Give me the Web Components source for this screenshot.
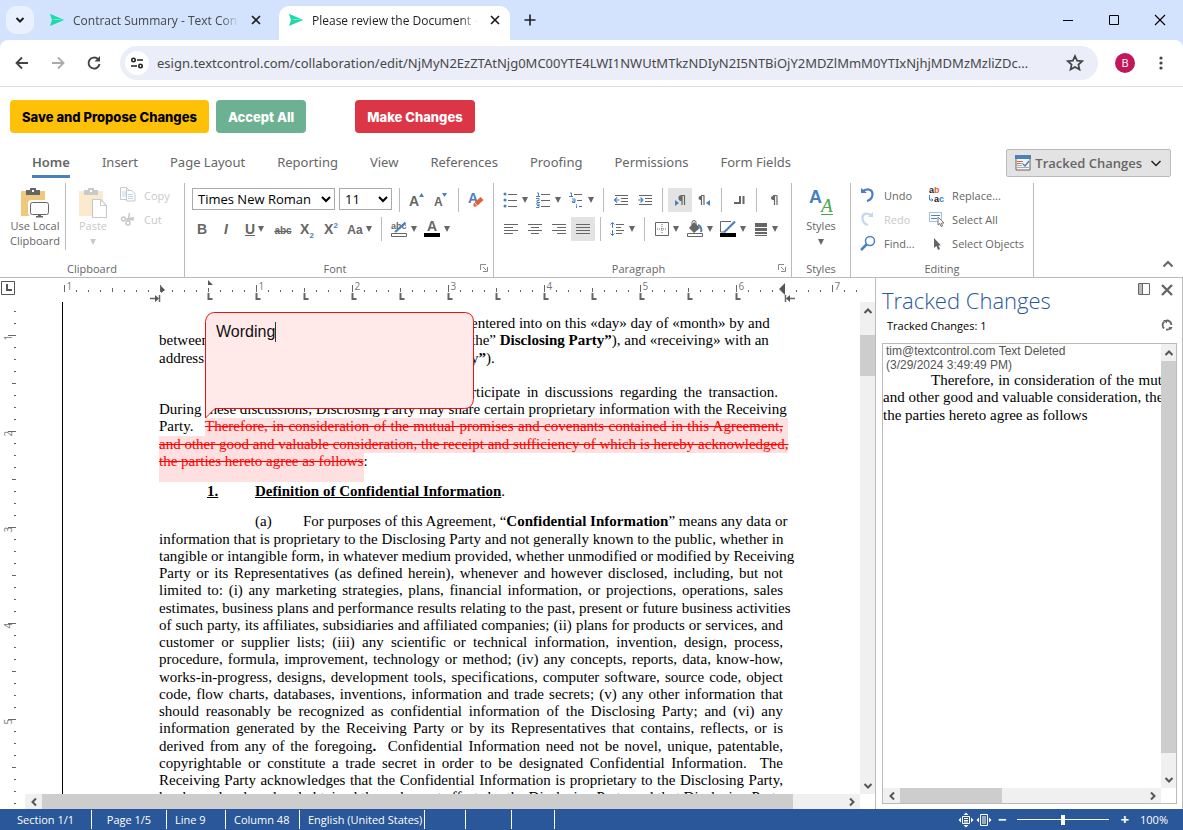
<!DOCTYPE html>
<html lang="en">
<head>
<meta charset="utf-8">
<title>Please review the Document - Text Control</title>
<style>
html, body {
    height: 100%;
    margin: 0;
}
body {
    --ink: #666;
    --line: #bbb;
    --blue: #4a80bd;
    --bar: #2a579a;
    font-family: "Open Sans", "Noto Sans", sans-serif;
    font-size: 13px;
    color: var(--ink);
    background: #fff;
    overflow: hidden;
}
</style>
</head>
<body>
<review-app></review-app>

<script>
const ICONS = {
    logo: [16, 14, `<path d="M1 1l14 6-14 6 2-6z" fill="#1fd8a4"/><path d="M1 1l14 6H6z" fill="#14e0ae"/><path d="M3 7h12l-8-1z" fill="#fff" opacity=".5"/>`],
    chevron: [12, 12, `<path d="M2.500 4l3.500 3.500 3.500-3.500" fill="none" stroke="currentColor" stroke-width="2"/>`],
    chevronThin: [12, 12, `<path d="M1.500 4l4.500 4.500 4.500-4.500" fill="none" stroke="currentColor" stroke-width="1.500"/>`],
    chevronUp: [12, 12, `<path d="M1.500 8.500l4.500-4.500 4.500 4.500" fill="none" stroke="currentColor" stroke-width="2"/>`],
    close: [12, 12, `<path d="M2 2l8 8M10 2l-8 8" stroke="currentColor" stroke-width="1.700"/>`],
    closeBold: [14, 14, `<path d="M2 2l10 10M12 2l-10 10" stroke="currentColor" stroke-width="2.400"/>`],
    plus: [14, 14, `<path d="M7 1.500v11M1.500 7h11" stroke="currentColor" stroke-width="1.600"/>`],
    minimize: [12, 12, `<path d="M1 6.500h10" stroke="currentColor"/>`],
    maximize: [12, 12, `<path d="M1.500 1.500h9v9h-9z" fill="none" stroke="currentColor"/>`],
    quit: [12, 12, `<path d="M1 1l10 10M11 1L1 11" stroke="currentColor" stroke-width="1.100"/>`],
    back: [16, 16, `<path d="M14 8H3M8 2.500L2.500 8 8 13.500" fill="none" stroke="currentColor" stroke-width="1.800"/>`],
    forward: [16, 16, `<path d="M2 8h11M8 2.500L13.500 8 8 13.500" fill="none" stroke="currentColor" stroke-width="1.800"/>`],
    reload: [16, 16, `<path d="M13.500 9A5.500 5.500 0 1 1 12 4.200" fill="none" stroke="currentColor" stroke-width="1.900"/><path d="M14 1v5.500H8.500z" fill="currentColor"/>`],
    site: [14, 14, `<g fill="none" stroke="currentColor" stroke-width="1.600"><circle cx="3.500" cy="4" r="1.700"/><path d="M7 4h6M1 10h6"/><circle cx="10.500" cy="10" r="1.700"/></g>`],
    star: [18, 18, `<path d="M9 2l2.100 4.700 5.100.5-3.800 3.400 1.100 5L9 13l-4.500 2.600 1.100-5L1.800 7.200l5.100-.5z" fill="none" stroke="currentColor" stroke-width="1.700"/>`],
    dots: [4, 16, `<circle cx="2" cy="3" r="1.600"/><circle cx="2" cy="8" r="1.600"/><circle cx="2" cy="13" r="1.600"/>`],
    tracked: [16, 16, `<path d="M1 2h14v13H1z" fill="#f5f5f5" stroke="currentColor"/><path d="M0 0h16v4H0z" fill="#4a80bd"/><path d="M2 6.500h6M2 8.500h3" stroke="#e0603a"/><path d="M5 8.500h3M2 10.500h5M2 12.500h12" stroke="#aaa"/><path d="M8 9l2 2 4-5" fill="none" stroke="#4a80bd" stroke-width="1.500"/>`],
    localClip: [28, 30, `<path d="M0 3h24v25H0z" fill="#efc87c"/><path d="M5 2h4V0h6v2h4v5H5z" fill="#666"/><path d="M11 2h2v2h-2z" fill="#fff"/><rect x="8.500" y="13.500" width="19" height="13" rx="2" fill="#fff" stroke="#fff" stroke-width="3"/><rect x="9.500" y="14.500" width="18" height="12" rx="2" fill="#fff" stroke="#666"/><path d="M17 27h3v1h2v1.500h-7V28h2z" fill="#666"/>`],
    paste: [28, 30, `<path d="M0 3h24v25H0z" fill="#fbeacd"/><path d="M5 2h4V0h6v2h4v5H5z" fill="#c9c9c9"/><path d="M11 2h2v2h-2z" fill="#fff"/><path d="M13.500 11.500h8l6 6v12h-14z" fill="#fff" stroke="#c9c9c9" stroke-width="1.200"/><path d="M21.500 11.500v6h6" fill="none" stroke="#c9c9c9"/>`],
    copy: [16, 16, `<path d="M.5.500h6l3 3v9h-9z" fill="#fff" stroke="#c9c9c9"/><path d="M6.500.500v3h3" fill="none" stroke="#c9c9c9"/><path d="M2 5h4M2 7h4M2 9h4" stroke="#bcd6f0"/><path d="M6.500 3.500h5l3.500 3v7.500H6.500z" fill="#fff" stroke="#c9c9c9"/><path d="M8 7.500h5M8 9.500h5M8 11.500h5" stroke="#bcd6f0"/>`],
    cut: [16, 16, `<g fill="none" stroke="#c9c9c9" stroke-width="1.500"><circle cx="3.500" cy="8" r="2"/><circle cx="8" cy="12" r="2"/><path d="M5.500 8.500L14 6.500M8 10L9.500 2"/><path d="M8 8.500h6" stroke-width="2"/></g>`],
    grow: [18, 18, `<text x="1" y="15" font-family="Liberation Sans" font-weight="700" font-size="14" fill="currentColor">A</text><path d="M11 6l2.500-4L16 6z" fill="#4a80bd"/>`],
    shrink: [18, 18, `<text x="2" y="15" font-family="Liberation Sans" font-weight="700" font-size="12" fill="currentColor">A</text><path d="M10 2l2.500 4L15 2z" fill="#4a80bd"/>`],
    clearFormat: [18, 18, `<text x="1" y="12" font-family="Liberation Sans" font-weight="700" font-size="14" fill="#4a80bd">A</text><path d="M6.500 12.500l7-6.500 3 3-7 6.500H6.500z" fill="#e0603a"/><path d="M7 11l3.500 4" stroke="#fff" stroke-width=".8"/>`],
    highlight: [18, 18, `<text x="1" y="9" font-family="Liberation Sans" font-weight="700" font-size="9" fill="currentColor">abc</text><path d="M15.500 2.500L8 9.500 5 12" stroke="#4a80bd" stroke-width="2.200" fill="none"/><path d="M1.500 13.500h15v3h-15z" fill="#fff" stroke="currentColor"/>`],
    fontColor: [18, 18, `<text x="4" y="11" font-family="Liberation Sans" font-weight="700" font-size="14" fill="currentColor">A</text><path d="M1 13h16v4H1z" fill="#000"/>`],
    bullets: [16, 16, `<g fill="#4a80bd"><circle cx="2" cy="2" r="1.500"/><circle cx="2" cy="8" r="1.500"/><circle cx="2" cy="14" r="1.500"/></g><path d="M5 2.500h9M5 8.500h9M5 14.500h9" stroke="currentColor"/>`],
    numbers: [16, 16, `<g fill="none" stroke="#4a80bd"><path d="M1 1h1.500v3.500M0 4.500h4M0 6.500h3v2H1v2h3M0 12h3v3.500H0M1 13.500h2"/></g><path d="M5 2.500h9M5 8.500h9M5 14.500h9" stroke="currentColor"/>`],
    levels: [16, 16, `<g fill="none" stroke="#4a80bd"><path d="M1 1h1.500v3.500M0 4.500h4M3 7h3v3.500H3.500V9H6M7.500 12v.8M7.500 13.500V16"/></g><path d="M5 2.500h8M8 8.500h5M10 14.500h3" stroke="currentColor"/>`],
    outdent: [16, 16, `<path d="M2 3.500h13M8 6.500h7M8 9.500h7M2 12.500h13" stroke="currentColor"/><path d="M1.500 8h5M4 5.500L1.500 8 4 10.500" fill="none" stroke="#4a80bd" stroke-width="1.200"/>`],
    indent: [16, 16, `<path d="M2 3.500h13M8 6.500h7M8 9.500h7M2 12.500h13" stroke="currentColor"/><path d="M1 8h5M3.500 5.500L6 8l-2.500 2.500" fill="none" stroke="#4a80bd" stroke-width="1.200"/>`],
    ltr: [16, 16, `<path d="M3 8v6l4-3z" fill="#4a80bd"/><path d="M13 3.500H9.500a2.500 2.500 0 0 0 0 5M10 3.500V13M12.500 3.500V13" fill="none" stroke="currentColor" stroke-width="1.200"/><path d="M10 4H9a2 2 0 0 0 0 4h1z" fill="currentColor"/>`],
    rtl: [16, 16, `<path d="M14 8v6l-4-3z" fill="#4a80bd"/><path d="M8.500 3.500H5M5.500 3.500V13M8 3.500V13" fill="none" stroke="currentColor" stroke-width="1.200"/><path d="M5.500 4h-1a2 2 0 0 0 0 4h1z" fill="currentColor"/>`],
    tabs: [16, 16, `<path d="M3 11h6V4M12.500 4v8" fill="none" stroke="currentColor" stroke-width="2"/>`],
    pilcrow: [16, 16, `<path d="M11 3.500H7M8.500 3.500V13M11 3.500V13" fill="none" stroke="currentColor" stroke-width="1.200"/><path d="M8.500 4H7a2 2 0 0 0 0 4h1.500z" fill="currentColor"/>`],
    left: [16, 16, `<path d="M1 3.500h14M1 6.500h9M1 9.500h14M1 12.500h9" stroke="currentColor"/>`],
    center: [16, 16, `<path d="M1 3.500h14M4 6.500h8M1 9.500h14M4 12.500h8" stroke="currentColor"/>`],
    right: [16, 16, `<path d="M1 3.500h14M6 6.500h9M1 9.500h14M6 12.500h9" stroke="currentColor"/>`],
    justify: [16, 16, `<path d="M1 3.500h14M1 6.500h14M1 9.500h14M1 12.500h14" stroke="currentColor"/>`],
    spacing: [16, 16, `<path d="M6 3.500h8M6 6.500h5M6 9.500h8M6 12.500h6" stroke="currentColor"/><path d="M2.500 1.500V7M2.500 9v5.500M.5 3.500l2-2 2 2M.5 12.500l2 2 2-2" fill="none" stroke="#4a80bd"/>`],
    borders: [16, 16, `<path d="M1.500 1.500h13v13h-13z" fill="none" stroke="currentColor"/><path d="M8 3v10M3 8h10" stroke="currentColor" stroke-dasharray="1 1"/>`],
    fill: [18, 18, `<path d="M3 8l5-6 6 6-6 5z" fill="currentColor"/><path d="M6 5V2.500a2 2 0 0 1 4 0V7" fill="none" stroke="currentColor"/><path d="M12 5c3 1 4 4 3 7" fill="none" stroke="#4a80bd" stroke-width="2"/><path d="M1.500 13.500h15v3h-15z" fill="#fff" stroke="currentColor"/>`],
    frame: [18, 18, `<path d="M12 1.500H1.500v10.500h5" fill="none" stroke="currentColor"/><path d="M16 1.500L8 9.500 5 12" fill="none" stroke="#4a80bd" stroke-width="2.200"/><path d="M1 13h16v4H1z" fill="#000"/>`],
    frameLines: [16, 16, `<path d="M2 2h12v4H2zM2 7h12v3H2zM2 11h12v2H2zM2 14h12v1H2z" fill="currentColor"/>`],
    styles: [28, 30, `<text x="2" y="15" font-family="Liberation Sans" font-weight="700" font-size="18" fill="#4a80bd">A</text><text x="14" y="24" font-family="Liberation Serif" font-style="italic" font-size="19" fill="#49a94d">A</text><path d="M14 26.500h12" stroke="#49a94d"/>`],
    undo: [16, 16, `<path d="M1 6h6L1 1z" fill="#4a80bd"/><path d="M3 4c5-3 9.500-1.500 9.500 3 0 3-2 6-5.500 7" fill="none" stroke="#4a80bd" stroke-width="2.200"/>`],
    redo: [16, 16, `<path d="M13 6H8l5-5z" fill="#c3d8ee"/><path d="M11 4C6 1 2.500 3 2.500 7c0 3 1.500 6 5.500 7" fill="none" stroke="#c3d8ee" stroke-width="2.200"/>`],
    find: [16, 16, `<circle cx="10" cy="6" r="4.500" fill="none" stroke="#4a80bd" stroke-width="1.500"/><path d="M7 9l-6 6" stroke="#4a80bd" stroke-width="2.500"/>`],
    replace: [16, 16, `<g font-family="Liberation Sans" font-weight="700" font-size="9"><text x="1" y="6" fill="#222">a</text><text x="6" y="6" fill="#e0603a">b</text><text x="6" y="15" fill="#222">a</text><text x="11" y="15" fill="#4a80bd">c</text></g><path d="M1.500 8v5H5M3.500 11.500L5 13l-1.500 1.500" fill="none" stroke="#4a80bd"/>`],
    selectAll: [16, 16, `<path d="M1.500 1.500h12v9h-12z" fill="none" stroke="#4a80bd" stroke-dasharray="1 1"/><path d="M3 4.500h9M3 7.500h6" stroke="#4a80bd"/><path d="M10 6v8l2-1.500 1 3 1.500-.5-1-3H16z" fill="#fff" stroke="#777"/>`],
    pointer: [16, 16, `<path d="M6 3v10l2.500-2 1.500 4 2-1-1.500-3.500H13z" fill="currentColor"/>`],
    launcher: [8, 8, `<path d="M.5 6V.500H6M3 3l3 3M7.500 3v4.500H3" fill="none" stroke="#888"/>`],
    tabL: [16, 16, `<path d="M1.500 1.500h13v13h-13z" fill="none" stroke="currentColor"/><path d="M7 4v6h5" fill="none" stroke="currentColor" stroke-width="2"/>`],
    dock: [12, 12, `<path d="M.5.500h11v11H.5z" fill="none" stroke="currentColor"/><path d="M1 1h3v10H1z" fill="#bbb"/><path d="M4.500 1v10" stroke="currentColor"/>`],
    refresh: [14, 14, `<path d="M4 10.500A4.500 4.500 0 0 1 4.500 3.500M6 2.600A4.500 4.500 0 0 1 11.400 7M10.500 10A4.500 4.500 0 0 1 6 11.400" fill="none" stroke="currentColor" stroke-width="1.800"/><path d="M3 2h4v3.500zM8.500 9h4l-1.500 3z" fill="currentColor"/>`],
    wholePage: [16, 16, `<path d="M4.500 4.500h7v7h-7zM6 6.500h4M6 8.500h4M6 10h4" fill="none" stroke="currentColor"/><path d="M5.500 3L8 .500 10.500 3zM5.500 13L8 15.500l2.500-2.500zM3 5.500L.5 8 3 10.500zM13 5.500L15.500 8 13 10.500z" fill="currentColor"/>`],
    pageWidth: [16, 16, `<path d="M4.500 2.500h7v11h-7zM6 5h4M6 7h4M6 9h4M6 11h4" fill="none" stroke="currentColor"/><path d="M3 5.500L.5 8 3 10.500zM13 5.500L15.500 8 13 10.500z" fill="currentColor"/>`],
};

/**
 * Base for all elements below: opens a shadow root with the given markup.
 */
class UiElement extends HTMLElement {
    connectedCallback() {
        if (this.shadowRoot) return;
        this.attachShadow({mode: "open"}).innerHTML = this.render();
    }
}

customElements.define("ui-icon", class extends UiElement {
    render() {
        const [w, h, body] = ICONS[this.getAttribute("name")];
        return `
<style>
:host { display: inline-flex; flex: none; }
svg { display: block; fill: currentColor; }
</style>
<svg width="${w}" height="${h}" viewBox="0 0 ${w} ${h}" aria-hidden="true">${body}</svg>`;
    }
});

customElements.define("browser-tab", class extends UiElement {
    render() {
        return `
<style>
:host {
    display: flex;
    align-items: center;
    gap: 8px;
    width: 231px;
    height: 34px;
    margin-top: 6px;
    padding: 0 9px 6px;
    box-sizing: border-box;
    border-radius: 10px 10px 0 0;
    font-size: 12px;
    color: #474747;
}
:host([selected]) {
    margin-left: 8px;
    background: #fff;
    color: #1f1f1f;
}
span {
    flex: 1;
    overflow: hidden;
    white-space: nowrap;
    mask-image: linear-gradient(90deg, #000 88%, transparent 98%);
}
button {
    display: flex;
    border: 0;
    padding: 0;
    background: none;
    color: #1f1f1f;
}
</style>
<ui-icon name="logo"></ui-icon>
<span><slot></slot></span>
<button aria-label="Close tab"><ui-icon name="close"></ui-icon></button>`;
    }
});

customElements.define("browser-chrome", class extends UiElement {
    render() {
        return `
<style>
:host { display: block; flex: none; background: #d3e2fd; color: #1f1f1f; }
button { display: flex; border: 0; padding: 0; background: none; color: inherit; }
.strip {
    display: flex;
    align-items: center;
    height: 40px;
    padding: 0 17px 0 6px;
}
.search {
    width: 28px;
    height: 28px;
    border-radius: 10px;
    background: #e9f0fe;
    align-items: center;
    justify-content: center;
    margin-right: 6px;
}
.new { margin-left: 13px; flex: 1; }
.window { display: flex; gap: 34px; color: #000; }
.tools {
    display: flex;
    align-items: center;
    gap: 20px;
    height: 46px;
    padding: 0 20px 0 14px;
    background: #fff;
    border-radius: 8px 8px 0 0;
    border-bottom: 1px solid #ddd;
    color: #444;
}
.off { color: #aaa; }
.address {
    flex: 1;
    display: flex;
    align-items: center;
    gap: 8px;
    height: 34px;
    padding: 0 14px 0 5px;
    margin: 0 -3px 0 -2px;
    border-radius: 17px;
    background: #ebeef9;
}
.site {
    width: 24px;
    height: 24px;
    border-radius: 12px;
    background: #fff;
    align-items: center;
    justify-content: center;
    color: #222;
}
input {
    flex: 1;
    min-width: 0;
    border: 0;
    padding: 0;
    background: none;
    font: 13px "Noto Sans", sans-serif;
    color: #474747;
    text-overflow: ellipsis;
}
.avatar {
    width: 20px;
    height: 20px;
    margin-right: 4px;
    border-radius: 10px;
    background: #c2185b;
    color: #fff;
    font: 11px/20px "Open Sans", sans-serif;
    justify-content: center;
}
</style>
<div class="strip">
    <button class="search" aria-label="Search tabs"><ui-icon name="chevron"></ui-icon></button>
    <browser-tab>Contract Summary - Text Control</browser-tab>
    <browser-tab selected>Please review the Document - Text Control</browser-tab>
    <button class="new" aria-label="New tab"><ui-icon name="plus"></ui-icon></button>
    <div class="window">
        <button aria-label="Minimize"><ui-icon name="minimize"></ui-icon></button>
        <button aria-label="Maximize"><ui-icon name="maximize"></ui-icon></button>
        <button aria-label="Close"><ui-icon name="quit"></ui-icon></button>
    </div>
</div>
<div class="tools">
    <button aria-label="Back"><ui-icon name="back"></ui-icon></button>
    <button class="off" aria-label="Forward"><ui-icon name="forward"></ui-icon></button>
    <button aria-label="Reload"><ui-icon name="reload"></ui-icon></button>
    <div class="address">
        <button class="site" aria-label="Site information"><ui-icon name="site"></ui-icon></button>
        <input aria-label="Address" value="esign.textcontrol.com/collaboration/edit/NjMyN2EzZTAtNjg0MC00YTE4LWI1NWUtMTkzNDIyN2I5NTBiOjY2MDZlMmM0YTIxNjhjMDMzMzliZDc...">
        <button aria-label="Bookmark"><ui-icon name="star"></ui-icon></button>
    </div>
    <button class="avatar" aria-label="Profile">B</button>
    <button aria-label="Menu"><ui-icon name="dots"></ui-icon></button>
</div>`;
    }
});

customElements.define("review-actions", class extends UiElement {
    render() {
        return `
<style>
:host { display: flex; flex: none; gap: 7px; padding: 13px 10px 12px; }
button {
    height: 33px;
    padding: 0 12px;
    border: 0;
    border-radius: 4px;
    font: 800 13px Inter, sans-serif;
    color: #fff;
}
.save { background: #ffc107; color: #000; }
.accept { background: #6bb192; }
.make { background: #dc3545; margin-left: 42px; }
</style>
<button class="save">Save and Propose Changes</button>
<button class="accept">Accept All</button>
<button class="make">Make Changes</button>`;
    }
});

customElements.define("ribbon-group", class extends UiElement {
    render() {
        const launcher = this.hasAttribute("launcher")
            ? `<button aria-label="${this.getAttribute("label")} settings"><ui-icon name="launcher"></ui-icon></button>` : "";
        return `
<style>
:host {
    display: flex;
    flex-direction: column;
    justify-content: space-between;
    box-sizing: border-box;
    border-right: 1px solid var(--line);
    padding: 0 5px;
}
footer {
    display: flex;
    align-items: center;
    height: 18px;
    font-size: 11px;
}
footer span { flex: 1; text-align: center; }
button { display: flex; border: 0; padding: 0; background: none; }
</style>
<slot></slot>
<footer><span>${this.getAttribute("label")}</span>${launcher}</footer>`;
    }
});

customElements.define("ribbon-button", class extends UiElement {
    render() {
        const icon = this.getAttribute("icon");
        return `
<style>
:host { display: block; }
button {
    display: flex;
    align-items: center;
    justify-content: center;
    height: 24px;
    min-width: 24px;
    border: 0;
    padding: 0;
    background: none;
    font: 700 14px "Liberation Sans", sans-serif;
    color: inherit;
    white-space: nowrap;
}
:host([active]) button { background: #e3e3e3; }
:host([drop]:not([big])) button { min-width: 33px; gap: 3px; }
:host([wide]) button {
    justify-content: flex-start;
    gap: 8px;
    padding: 0 4px;
    font: 11px "Open Sans", sans-serif;
}
:host([big]) button {
    flex-direction: column;
    justify-content: flex-start;
    width: 100%;
    height: 67px;
    padding: 5px 0 0;
    font: 11px/15px "Open Sans", sans-serif;
    white-space: normal;
}
:host([disabled]) button { color: #c9c9c9; }
.arrow {
    border: 3px solid transparent;
    border-top: 6px solid currentColor;
    border-bottom: 0;
}
:host([big]) .arrow { margin-top: 6px; }
</style>
<button aria-label="${this.title || this.textContent}">
    ${icon ? `<ui-icon name="${icon}"></ui-icon>` : ""}
    ${this.textContent.trim() ? `<span><slot></slot></span>` : ""}
    ${this.hasAttribute("drop") ? `<i class="arrow"></i>` : ""}
</button>`;
    }
});

customElements.define("ribbon-bar", class extends UiElement {
    render() {
        const tabs = ["Insert", "Page Layout", "Reporting", "View", "References", "Proofing", "Permissions", "Form Fields"];
        return `
<style>
:host { display: block; flex: none; border-bottom: 1px solid var(--line); }
nav { display: flex; align-items: center; height: 36px; padding: 0 12px 2px 32px; }
nav button {
    border: 0;
    border-bottom: 3px solid transparent;
    padding: 3px 0;
    margin-right: 32px;
    background: none;
    font: 13px/20px "Noto Sans", sans-serif;
    color: inherit;
    white-space: nowrap;
}
nav .home { font-weight: 600; border-color: var(--blue); }
nav .tracked {
    display: flex;
    align-items: center;
    gap: 4px;
    height: 28px;
    box-sizing: border-box;
    margin: 0 0 0 auto;
    padding: 0 8px;
    border: 1px solid var(--line);
    border-radius: 2px;
    background: #e3e3e3;
    font: 600 13px "Open Sans", sans-serif;
}
.tracked ui-icon:last-child { margin-left: 4px; color: #222; }
.groups { display: flex; height: 94px; }
.clipboard { width: 185px; }
.font { width: 309px; }
.paragraph { width: 298px; }
.styles { width: 59px; }
.editing { width: 183px; }
.row { display: flex; }
.rows { display: grid; gap: 5px; padding-top: 5px; }
.editing .row { justify-content: space-between; }
i.sep { width: 1px; margin: 0 5px; background: var(--line); }
.clipboard i.sep { margin: 0 4px 0 0; }
.clipboard ribbon-button[big] { width: 60px; }
.clipboard ribbon-button[drop] { width: 46px; }
select {
    height: 22px;
    border: 1px solid #aaa;
    padding: 0 1px;
    margin-left: 2px;
    background: #fff;
    font: 13px "Open Sans", sans-serif;
    color: #000;
}
.face { width: 143px; }
.size { width: 53px; margin: 0 2px 0 4px; }
sub, sup { font-size: 8px; line-height: 0; color: var(--blue); }
.collapse {
    display: flex;
    align-self: flex-end;
    border: 0;
    padding: 7px 9px;
    margin-left: auto;
    background: none;
    color: inherit;
}
</style>
<nav>
    <button class="home">Home</button>
    ${tabs.map(tab => `<button>${tab}</button>`).join("")}
    <button class="tracked"><ui-icon name="tracked"></ui-icon>Tracked Changes<ui-icon name="chevronThin"></ui-icon></button>
</nav>
<div class="groups">
    <ribbon-group class="clipboard" label="Clipboard">
        <div class="row">
            <ribbon-button big icon="localClip">Use Local Clipboard</ribbon-button><i class="sep"></i>
            <ribbon-button big drop disabled icon="paste">Paste</ribbon-button>
            <div>
                <ribbon-button wide disabled icon="copy">Copy</ribbon-button>
                <ribbon-button wide disabled icon="cut">Cut</ribbon-button>
            </div>
        </div>
    </ribbon-group>
    <ribbon-group class="font" label="Font" launcher>
        <div class="rows">
            <div class="row">
                <select class="face" aria-label="Font"><option>Times New Roman</option></select>
                <select class="size" aria-label="Font size"><option>11</option></select><i class="sep"></i>
                <ribbon-button icon="grow" title="Grow font"></ribbon-button>
                <ribbon-button icon="shrink" title="Shrink font"></ribbon-button><i class="sep"></i>
                <ribbon-button icon="clearFormat" title="Clear formatting"></ribbon-button>
            </div>
            <div class="row">
                <ribbon-button title="Bold">B</ribbon-button>
                <ribbon-button title="Italic"><em>I</em></ribbon-button>
                <ribbon-button drop title="Underline"><u>U</u></ribbon-button>
                <ribbon-button title="Strikethrough"><s style="font-size: 10px">abc</s></ribbon-button>
                <ribbon-button title="Subscript">X<sub>2</sub></ribbon-button>
                <ribbon-button title="Superscript">X<sup>2</sup></ribbon-button>
                <ribbon-button drop title="Change case"><span style="font-size: 12px">Aa</span></ribbon-button><i class="sep"></i>
                <ribbon-button drop icon="highlight" title="Highlight color"></ribbon-button>
                <ribbon-button drop icon="fontColor" title="Font color"></ribbon-button>
            </div>
        </div>
    </ribbon-group>
    <ribbon-group class="paragraph" label="Paragraph" launcher>
        <div class="rows">
            <div class="row">
                <ribbon-button drop icon="bullets" title="Bullets"></ribbon-button>
                <ribbon-button drop icon="numbers" title="Numbering"></ribbon-button>
                <ribbon-button drop icon="levels" title="Multilevel list"></ribbon-button><i class="sep"></i>
                <ribbon-button icon="outdent" title="Decrease indent"></ribbon-button>
                <ribbon-button icon="indent" title="Increase indent"></ribbon-button><i class="sep"></i>
                <ribbon-button active icon="ltr" title="Left to right"></ribbon-button>
                <ribbon-button icon="rtl" title="Right to left"></ribbon-button><i class="sep"></i>
                <ribbon-button icon="tabs" title="Tabs"></ribbon-button><i class="sep"></i>
                <ribbon-button icon="pilcrow" title="Control characters"></ribbon-button>
            </div>
            <div class="row">
                <ribbon-button icon="left" title="Align left"></ribbon-button>
                <ribbon-button icon="center" title="Center"></ribbon-button>
                <ribbon-button icon="right" title="Align right"></ribbon-button>
                <ribbon-button active icon="justify" title="Justify"></ribbon-button><i class="sep"></i>
                <ribbon-button drop icon="spacing" title="Line spacing"></ribbon-button><i class="sep"></i>
                <ribbon-button drop icon="borders" title="Borders"></ribbon-button>
                <ribbon-button drop icon="fill" title="Fill color"></ribbon-button>
                <ribbon-button drop icon="frame" title="Frame color"></ribbon-button>
                <ribbon-button drop icon="frameLines" title="Frame lines"></ribbon-button>
            </div>
        </div>
    </ribbon-group>
    <ribbon-group class="styles" label="Styles">
        <ribbon-button big drop icon="styles">Styles</ribbon-button>
    </ribbon-group>
    <ribbon-group class="editing" label="Editing">
        <div class="row">
            <div>
                <ribbon-button wide icon="undo">Undo</ribbon-button>
                <ribbon-button wide disabled icon="redo">Redo</ribbon-button>
                <ribbon-button wide icon="find">Find...</ribbon-button>
            </div>
            <div>
                <ribbon-button wide icon="replace">Replace...</ribbon-button>
                <ribbon-button wide icon="selectAll">Select All</ribbon-button>
                <ribbon-button wide icon="pointer">Select Objects</ribbon-button>
            </div>
        </div>
    </ribbon-group>
    <button class="collapse" aria-label="Collapse ribbon"><ui-icon name="chevronUp"></ui-icon></button>
</div>`;
    }
});

/** before / thumb / after are the proportions of the track */
customElements.define("scroll-bar", class extends UiElement {
    render() {
        const [before, thumb, after] = this.getAttribute("track").split(" ");
        const vertical = this.hasAttribute("vertical");
        return `
<style>
:host { display: flex; flex: none; flex-direction: ${vertical ? "column" : "row"}; background: #f0f0f0; color: #555; }
button {
    display: flex;
    align-items: center;
    justify-content: center;
    flex: none;
    ${vertical ? "width: 15px; height: 17px;" : "width: 17px; height: 15px;"}
    border: 0;
    padding: 0;
    background: none;
    color: inherit;
}
svg { fill: none; stroke: currentColor; stroke-width: 2; }
</style>
<button aria-label="Scroll back"><svg width="10" height="10"><path d="${vertical ? "M1.500 7L5 3.500 8.500 7" : "M7 1.500L3.500 5 7 8.500"}"/></svg></button>
<i style="flex: ${before}"></i><i style="flex: ${thumb}; background: #cdcdcd"></i><i style="flex: ${after}"></i>
<button aria-label="Scroll on"><svg width="10" height="10"><path d="${vertical ? "M1.500 3L5 6.500 8.500 3" : "M3 1.500L6.500 5 3 8.500"}"/></svg></button>`;
    }
});

customElements.define("page-ruler", class extends UiElement {
    render() {
        return `
<style>
:host { display: block; overflow: hidden; }
svg { display: block; stroke: #666; font: 10px "Open Sans", sans-serif; }
text { stroke: none; fill: #777; }
.mark { fill: #555; stroke: none; }
</style>
${this.hasAttribute("vertical") ? this.#vertical() : this.#horizontal()}`;
    }

    #horizontal() {
        let out = "";
        for (let i = -8; i <= 58; i++) {
            const x = 160.5 + i * 12;
            const inch = i % 8 === 0;
            const top = inch ? 7 : i % 4 === 0 ? 10 : 12;
            out += `<path d="M${x} ${top}V14"/>`;
            if (inch && i) out += `<text x="${x + 2}" y="12">${Math.abs(i / 8)}</text>`;
            if (i >= 4 && i <= 48 && i % 4 === 0)
                out += `<path d="M${x} 15v6h4" fill="none" stroke-width="2"/>`;
        }
        out += `<path class="mark" d="M161 8l4 4-4 3zM208 2l5 5h-5zM785 5v12l-6-6z"/>`;
        out += `<path d="M150 20.500h7M159.500 17v7M785.500 17v7M788 20.500h7" stroke-width="1.500"/><path class="mark" d="M155 17l4 3.500-4 3.500zM790 17l-4 3.500 4 3.500z"/>`;
        return `<svg width="860" height="25">${out}</svg>`;
    }

    #vertical() {
        let out = "";
        for (let i = -2; i <= 39; i++) {
            const y = 33.5 + i * 12;
            const inch = i % 8 === 0;
            out += `<path d="M${inch ? 8 : i % 4 === 0 ? 12 : 14} ${y}H16"/>`;
            if (inch) out += `<text transform="translate(12 ${y + 5}) rotate(-90)">${i / 8 + 1}</text>`;
        }
        return `<svg width="25" height="508">${out}</svg>`;
    }
});

customElements.define("comment-balloon", class extends UiElement {
    render() {
        return `
<style>
:host {
    display: block;
    position: absolute;
    width: 269px;
    height: 107px;
}
svg { position: absolute; inset: 0; }
textarea {
    position: relative;
    display: block;
    field-sizing: content;
    margin: 10px 0 0 11px;
    padding: 0;
    border: 0;
    border-right: 1px solid #333;
    background: none;
    resize: none;
    overflow: hidden;
    outline: 0;
    font: 16px/20px "Liberation Sans", sans-serif;
    color: #111;
}
</style>
<svg width="269" height="107" aria-hidden="true"><path d="M8.500.500h252q8 1 8 9v78q-1 9-9 9H10L.5 106V9.500q1-8 8-9z" fill="#ffeae9" stroke="#e11" stroke-linejoin="round"/></svg>
<textarea aria-label="Comment" rows="1">Wording</textarea>`;
    }
});

const DELETED = [
    "Therefore, in consideration of the mutual promises and covenants contained in this Agreement,",
    "and other good and valuable consideration, the receipt and sufficiency of which is hereby acknowledged,",
    "the parties hereto agree as follows",
];

const BODY = [
    "information that is proprietary to the Disclosing Party and not generally known to the public, whether in",
    "tangible or intangible form, in whatever medium provided, whether unmodified or modified by Receiving",
    "Party or its Representatives (as defined herein), whenever and however disclosed, including, but not",
    "limited to: (i) any marketing strategies, plans, financial information, or projections, operations, sales",
    "estimates, business plans and performance results relating to the past, present or future business activities",
    "of such party, its affiliates, subsidiaries and affiliated companies; (ii) plans for products or services, and",
    "customer or supplier lists; (iii) any scientific or technical information, invention, design, process,",
    "procedure, formula, improvement, technology or method; (iv) any concepts, reports, data, know-how,",
    "works-in-progress, designs, development tools, specifications, computer software, source code, object",
    "code, flow charts, databases, inventions, information and trade secrets; (v) any other information that",
    "should reasonably be recognized as confidential information of the Disclosing Party; and (vi) any",
    "information generated by the Receiving Party or by its Representatives that contains, reflects, or is",
    "derived from any of the foregoing<b>.</b>&nbsp; Confidential Information need not be novel, unique, patentable,",
    "copyrightable or constitute a trade secret in order to be designated Confidential Information.&nbsp; The",
    "Receiving Party acknowledges that the Confidential Information is proprietary to the Disclosing Party,",
    "has been developed and obtained through great efforts by the Disclosing Party and that Disclosing Party",
];

customElements.define("document-page", class extends UiElement {
    render() {
        return `
<style>
:host {
    display: block;
    position: relative;
    overflow: hidden;
    margin-left: 37px;
    border-left: 1px solid #000;
    padding: 13px 0 0 96px;
    font: 15px/1.15 "Liberation Serif", serif;
    color: #000;
}
section { width: 624px; margin-bottom: 13px; }
section.intro { margin-bottom: 17px; }
p { margin: 0; white-space: nowrap; text-align-last: justify; }
p.loose { text-align-last: left; }
p.split { display: flex; }
.split > :first-child { width: 312px; }
.split > :last-child { flex: 1; }
.split.run > :first-child { width: 46px; text-align-last: left; }
del { color: #f00; background: #ffe0e0; text-decoration-thickness: 1px; }
del.full { display: block; margin-right: -5px; padding-right: 5px; }
del.tail { display: inline-block; padding-bottom: 12px; margin-bottom: -12px; }
.tab { display: inline-block; width: 48px; text-align-last: left; }
.heading { white-space: pre; tab-size: 48px; text-align-last: left; }
.heading u { font-weight: 700; }
comment-balloon { left: 142px; top: 10px; }
</style>
<section class="intro">
    <p class="split loose"><span></span><span>entered into on this «day» day of «month» by and</span></p>
    <p class="split loose"><span>between</span><span>the” <b>Disclosing Party”</b>), and «receiving» with an</span></p>
    <p class="split loose"><span>address</span><span>y<b>”</b>).</span></p>
</section>
<section>
    <p class="split"><span></span><span style="padding-right: 5px">rticipate in discussions regarding the transaction.</span></p>
    <p>During these discussions, Disclosing Party may share certain proprietary information with the Receiving</p>
    <p class="split run"><span>Party.</span><del class="full">${DELETED[0]}</del></p>
    <p><del class="full">${DELETED[1]}</del></p>
    <p class="loose"><del class="tail">${DELETED[2]}</del>:</p>
</section>
<section><p class="heading">&#9;<u>1.&#9;Definition of Confidential Information</u>.</p></section>
<section>
    <p><i class="tab"></i><i class="tab"></i><span class="tab">(a)</span>For purposes of this Agreement, “<b>Confidential Information</b>” means any data or</p>
    ${BODY.map(line => `<p>${line}</p>`).join("")}
</section>
<comment-balloon></comment-balloon>`;
    }
});

customElements.define("text-editor", class extends UiElement {
    render() {
        return `
<style>
:host { display: grid; flex: 1; min-width: 0; grid-template: 24px minmax(0, 1fr) 15px / 25px minmax(0, 1fr) 15px; }
.corner { grid-area: 1 / 1; padding: 2px 0 0; z-index: 1; color: #555; }
.top { grid-area: 1 / 1 / 2 / 4; }
.side { grid-area: 2 / 1 / 4 / 2; }
document-page { grid-area: 2 / 2; }
.v { grid-area: 2 / 3; }
.h { grid-area: 3 / 2 / 4 / 3; }
</style>
<ui-icon class="corner" name="tabL"></ui-icon>
<page-ruler class="top"></page-ruler>
<page-ruler class="side" vertical></page-ruler>
<document-page></document-page>
<scroll-bar class="v" vertical track="16 41 401"></scroll-bar>
<scroll-bar class="h" track="0 751 50"></scroll-bar>`;
    }
});

customElements.define("changes-panel", class extends UiElement {
    render() {
        return `
<style>
:host {
    display: flex;
    flex-direction: column;
    width: 308px;
    box-sizing: border-box;
    border: 1px solid var(--line);
    border-width: 0 1px;
    padding: 5px 5px 5px 6px;
}
button { display: flex; border: 0; padding: 0; background: none; color: inherit; }
header { display: flex; align-items: flex-start; gap: 10px; padding-right: 3px; }
h2 { flex: 1; margin: 0; font: 300 22px/34px "Open Sans", sans-serif; color: var(--bar); white-space: nowrap; }
.count { display: flex; align-items: center; justify-content: space-between; height: 16px; padding: 0 3px 0 5px; font-size: 11px; color: #000; }
.count button { color: var(--ink); }
.list {
    flex: 1;
    min-height: 0;
    display: grid;
    grid-template: minmax(0, 1fr) 15px / minmax(0, 1fr) 15px;
    margin-top: 10px;
    border: 1px solid var(--line);
}
.entries { overflow: hidden; }
.who { margin: 0; padding-left: 3px; font: 12px/14px "Liberation Sans", sans-serif; color: #555; }
.change { width: 624px; font: 15px/1.15 "Liberation Serif", serif; color: #000; }
.change p { margin: 0; white-space: nowrap; text-align-last: justify; }
.change p:first-child { padding-left: 48px; }
.change p:last-child { text-align-last: left; }
</style>
<header>
    <h2>Tracked Changes</h2>
    <button aria-label="Dock"><ui-icon name="dock"></ui-icon></button>
    <button aria-label="Close"><ui-icon name="closeBold"></ui-icon></button>
</header>
<div class="count">Tracked Changes: 1<button aria-label="Refresh"><ui-icon name="refresh"></ui-icon></button></div>
<div class="list">
    <div class="entries">
        <p class="who">tim@textcontrol.com Text Deleted<br>(3/29/2024 3:49:49 PM)</p>
        <div class="change">${DELETED.map(line => `<p>${line}</p>`).join("")}</div>
    </div>
    <scroll-bar vertical track="0 392 18"></scroll-bar>
    <scroll-bar track="0 102 142"></scroll-bar>
</div>`;
    }
});

customElements.define("status-bar", class extends UiElement {
    render() {
        return `
<style>
:host { display: flex; flex: none; height: 21px; align-items: center; background: var(--bar); color: #fff; font-size: 11px; white-space: nowrap; }
span { box-sizing: border-box; height: 19px; line-height: 19px; border-right: 1px solid #fff; padding: 0 8px; text-align: center; }
span:first-child { padding-left: 16px; }
button { display: flex; border: 0; padding: 0; background: none; color: inherit; }
.zoom { display: flex; align-items: center; gap: 2px; margin-left: auto; padding-right: 15px; }
.step { padding: 0 4px; font: 700 15px/19px "Open Sans", sans-serif; }
input { appearance: none; width: 92px; height: 11px; margin: 0 5px; background: linear-gradient(#fff, #fff) center / 100% 1px no-repeat; }
input::-webkit-slider-thumb { appearance: none; width: 4px; height: 10px; background: #fff; }
output { padding-left: 5px; }
</style>
<span style="width: 92px">Section 1/1</span><span style="width: 75px">Page 1/5</span><span style="width: 59px; text-align: left">Line 9</span><span style="width: 74px; text-align: left">Column 48</span><span style="width: 125px">English (United States)</span><span style="width: 41px"></span><span style="width: 46px"></span><span style="width: 43px"></span>
<div class="zoom">
    <button aria-label="Whole page"><ui-icon name="wholePage"></ui-icon></button>
    <button aria-label="Page width"><ui-icon name="pageWidth"></ui-icon></button>
    <button class="step" aria-label="Zoom out">−</button>
    <input type="range" aria-label="Zoom" min="0" max="200" value="98">
    <button class="step" aria-label="Zoom in">+</button>
    <output>100%</output>
</div>`;
    }
});

customElements.define("review-app", class extends UiElement {
    render() {
        return `
<style>
:host { display: flex; flex-direction: column; height: 100%; }
main { display: flex; flex: 1; min-height: 0; }
</style>
<browser-chrome></browser-chrome>
<review-actions></review-actions>
<ribbon-bar></ribbon-bar>
<main>
    <text-editor></text-editor>
    <changes-panel></changes-panel>
</main>
<status-bar></status-bar>`;
    }
});
</script>
</body>
</html>
